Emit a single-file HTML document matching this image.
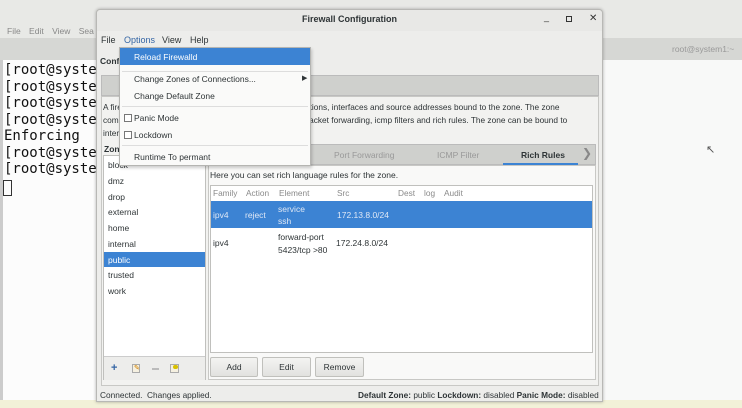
<!DOCTYPE html>
<html><head><meta charset="utf-8"><style>
*{margin:0;padding:0;box-sizing:border-box}
body{width:742px;height:408px;overflow:hidden;position:relative;background:#f8f9f8;font-family:"Liberation Sans","DejaVu Sans",sans-serif;font-size:9px;color:#2e3436}
.a{position:absolute;white-space:nowrap}
.mono{font-family:"DejaVu Sans Mono","Liberation Mono",monospace;font-size:14px;color:#111}
.zi{position:absolute;left:4px;font-size:8.5px}
.btn{position:absolute;top:357px;height:20px;border:1px solid #c0c0bc;border-radius:2px;background:linear-gradient(#f4f4f2,#e2e2df);text-align:center;line-height:18px;font-size:8.5px}
.mi{position:absolute;left:14px;font-size:8.5px;color:#2e3436}
.cb{position:absolute;left:4px;width:8px;height:8px;border:1px solid #777;background:#fff}
.sep{position:absolute;left:2px;right:2px;height:1px;background:#ddd}
</style></head><body>
<div class="a" style="left:0;top:0;width:742px;height:38px;background:#e8e9e6"></div>
<div class="a" style="left:0;top:38px;width:742px;height:22px;background:#d6d7d4"></div>
<div class="a" style="left:0;top:22px;width:96px;height:16px;background:#e8e9e6"></div>
<div class="a" style="left:7px;top:26px;color:#888;font-size:8.5px;word-spacing:6px">File Edit View Sea</div>
<div class="a" style="left:672px;top:44px;color:#999;font-size:8.5px">root@system1:~</div>
<div class="a" style="left:0;top:60px;width:96px;height:340px;background:#fcfcfc"></div>
<div class="a" style="left:0;top:60px;width:3px;height:340px;background:#ccc"></div>
<div class="a mono" style="left:4px;top:62px;line-height:16.5px;white-space:pre">[root@syste
[root@syste
[root@syste
[root@syste
Enforcing
[root@syste
[root@syste</div>
<div class="a" style="left:3px;top:180px;width:9px;height:16px;border:1px solid #333"></div>
<div class="a" style="left:0;top:400px;width:742px;height:8px;background:#f2f1d8"></div>
<div class="a" style="left:706px;top:143px;font-size:11px;color:#555">&#8598;</div>

<div class="a" style="left:96px;top:9px;width:507px;height:393px;background:#ededeb;border:1px solid #b8b8b5;border-radius:4px 4px 0 0;box-shadow:0 0 3px rgba(0,0,0,.3)"></div>
<div class="a" style="left:97px;top:10px;width:505px;height:21px;background:#e8e8e6;border-radius:4px 4px 0 0"></div>
<div class="a" style="left:97px;top:14px;width:505px;text-align:center;font-weight:bold;font-size:9px;color:#2e3436">Firewall Configuration</div>
<div class="a" style="left:544px;top:12px;font-size:9px;color:#333">_</div>
<div class="a" style="left:566px;top:16px;width:6px;height:6px;border:1.5px solid #333"></div>
<div class="a" style="left:589px;top:13px;font-size:10px;color:#333">✕</div>
<div class="a" style="left:101px;top:35px;font-size:9px">File</div>
<div class="a" style="left:124px;top:35px;font-size:9px;color:#3465a4">Options</div>
<div class="a" style="left:162px;top:35px;font-size:9px">View</div>
<div class="a" style="left:190px;top:35px;font-size:9px">Help</div>
<div class="a" style="left:100px;top:56px;font-weight:bold;font-size:8.5px">Conf</div>
<div class="a" style="left:101px;top:75px;width:498px;height:21px;background:#cfd0cd;border:1px solid #bbb"></div>
<div class="a" style="left:101px;top:96px;width:498px;height:290px;background:#f2f2f0;border:1px solid #c8c8c5"></div>
<div class="a" style="left:103px;top:101px;font-size:8.3px;line-height:13px;color:#2e3436">A firewall zone defines the trust level for network connections, interfaces and source addresses bound to the zone. The zone<br>combines services, ports, protocols, masquerade, port/packet forwarding, icmp filters and rich rules. The zone can be bound to<br>interfaces and sources.</div>
<div class="a" style="left:104px;top:144px;font-weight:bold;font-size:8.5px">Zone</div>

<div class="a" style="left:103px;top:155px;width:103px;height:225px;background:#fff;border:1px solid #c0c0bd">
<div class="zi" style="top:4px">block</div>
<div class="zi" style="top:20px">dmz</div>
<div class="zi" style="top:36px">drop</div>
<div class="zi" style="top:51px">external</div>
<div class="zi" style="top:67px">home</div>
<div class="zi" style="top:83px">internal</div>
<div style="position:absolute;left:0;top:96px;width:101px;height:15px;background:#3c83d3"></div>
<div class="zi" style="top:99px;color:#fff">public</div>
<div class="zi" style="top:114px">trusted</div>
<div class="zi" style="top:130px">work</div>
<div style="position:absolute;left:0;top:200px;width:101px;height:24px;background:#ededeb;border-top:1px solid #ccc"></div>
</div>
<div class="a" style="left:111px;top:362px;color:#3465a4;font-weight:bold;font-size:11px">+</div>
<div class="a" style="left:132px;top:364px;width:8px;height:9px;background:#f5f0e0;border:1px solid #aaa"></div>
<div class="a" style="left:134px;top:364px;font-size:7px;color:#d08000">✎</div>
<div class="a" style="left:152px;top:368px;width:7px;height:2px;background:#bbb"></div>
<div class="a" style="left:170px;top:364px;width:9px;height:9px;background:#f5f0e0;border:1px solid #aaa"></div>
<div class="a" style="left:173px;top:365px;width:5px;height:4px;background:#d8c000;border-radius:2px"></div>

<div class="a" style="left:208px;top:144px;width:388px;height:21px;background:#cfd0cd;border:1px solid #bbb"></div>
<div class="a" style="left:334px;top:150px;font-size:8.5px;color:#999">Port Forwarding</div>
<div class="a" style="left:437px;top:150px;font-size:8.5px;color:#999">ICMP Filter</div>
<div class="a" style="left:521px;top:150px;font-size:8.5px;font-weight:bold;color:#2e3436">Rich Rules</div>
<div class="a" style="left:503px;top:163px;width:75px;height:2px;background:#3c83d3"></div>
<div class="a" style="left:582px;top:146px;font-size:12px;color:#888">&#x276F;</div>
<div class="a" style="left:208px;top:165px;width:388px;height:215px;background:#f9f9f8;border:1px solid #c8c8c5"></div>
<div class="a" style="left:210px;top:170px;font-size:8.5px">Here you can set rich language rules for the zone.</div>
<div class="a" style="left:210px;top:185px;width:383px;height:168px;background:#fff;border:1px solid #c0c0bd"></div>
<div class="a" style="left:213px;top:188px;font-size:8.3px;color:#8a8a8a">Family</div>
<div class="a" style="left:246px;top:188px;font-size:8.3px;color:#8a8a8a">Action</div>
<div class="a" style="left:279px;top:188px;font-size:8.3px;color:#8a8a8a">Element</div>
<div class="a" style="left:337px;top:188px;font-size:8.3px;color:#8a8a8a">Src</div>
<div class="a" style="left:398px;top:188px;font-size:8.3px;color:#8a8a8a">Dest</div>
<div class="a" style="left:424px;top:188px;font-size:8.3px;color:#8a8a8a">log</div>
<div class="a" style="left:444px;top:188px;font-size:8.3px;color:#8a8a8a">Audit</div>
<div class="a" style="left:211px;top:201px;width:381px;height:27px;background:#3c83d3"></div>
<div class="a" style="left:213px;top:210px;font-size:8.5px;color:#dfe8f5">ipv4</div>
<div class="a" style="left:245px;top:210px;font-size:8.5px;color:#dfe8f5">reject</div>
<div class="a" style="left:278px;top:203px;font-size:8.5px;color:#dfe8f5;line-height:12px">service<br>ssh</div>
<div class="a" style="left:337px;top:210px;font-size:8.5px;color:#dfe8f5">172.13.8.0/24</div>
<div class="a" style="left:213px;top:238px;font-size:8.5px">ipv4</div>
<div class="a" style="left:278px;top:231px;font-size:8.5px;line-height:13px">forward-port<br>5423/tcp &gt;80</div>
<div class="a" style="left:336px;top:238px;font-size:8.5px">172.24.8.0/24</div>
<div class="btn" style="left:210px;width:48px">Add</div>
<div class="btn" style="left:262px;width:49px">Edit</div>
<div class="btn" style="left:315px;width:49px">Remove</div>

<div class="a" style="left:119px;top:47px;width:192px;height:119px;background:#fafaf9;border:1px solid #b5b5b2;box-shadow:1px 2px 3px rgba(0,0,0,.2)">
<div style="position:absolute;left:0;top:0;width:190px;height:17px;background:#3c83d3"></div>
<div class="mi" style="top:4px;color:#fff">Reload Firewalld</div>
<div class="sep" style="top:23px"></div>
<div class="mi" style="top:26px">Change Zones of Connections...</div>
<div style="position:absolute;left:182px;top:26px;font-size:7px">&#9654;</div>
<div class="mi" style="top:43px">Change Default Zone</div>
<div class="sep" style="top:58px"></div>
<div class="cb" style="top:66px"></div><div class="mi" style="top:65px">Panic Mode</div>
<div class="cb" style="top:83px"></div><div class="mi" style="top:82px">Lockdown</div>
<div class="sep" style="top:97px"></div>
<div class="mi" style="top:104px">Runtime To permant</div>
</div>

<div class="a" style="left:100px;top:390px;font-size:8.3px">Connected.&nbsp; Changes applied.</div>
<div class="a" style="left:358px;top:390px;font-size:8.3px"><b>Default Zone:</b> public <b>Lockdown:</b> disabled <b>Panic Mode:</b> disabled</div>
</body></html>
